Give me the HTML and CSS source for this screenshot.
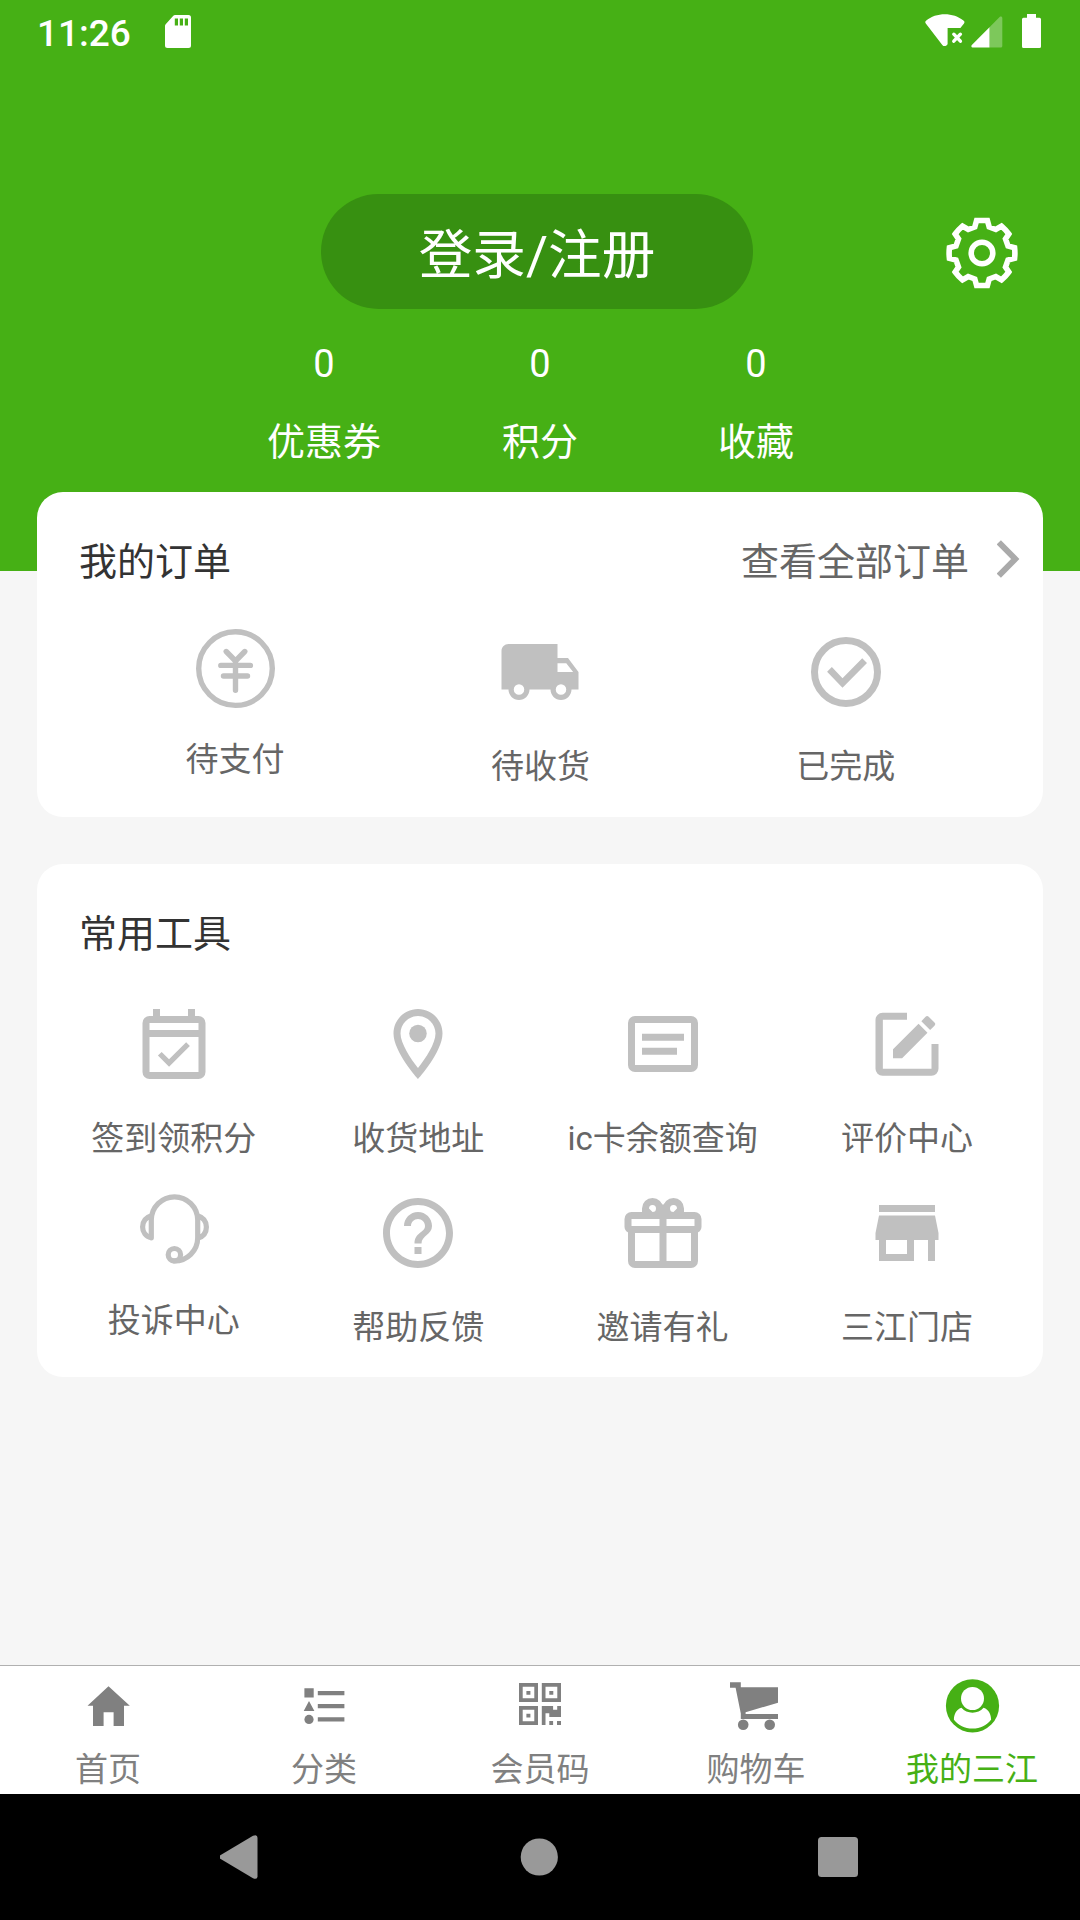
FILE: index.html
```html
<!DOCTYPE html>
<html lang="zh-CN">
<head>
<meta charset="utf-8">
<title>我的三江</title>
<link rel="stylesheet" href="styles.css">
</head>
<body>
<div class="screen">
  <header class="header">
    <div class="status">
      <span class="time">11:26</span>
      <svg class="sd" width="26" height="33" viewBox="0 0 26 33"><path fill="#fff" fill-rule="evenodd" d="M10 0h13.500a2.500 2.500 0 0 1 2.500 2.500v28a2.500 2.500 0 0 1-2.500 2.500h-21a2.500 2.500 0 0 1-2.500-2.500V11q0-1 .7-1.700L8.300 .7Q9 0 10 0zM9.800 3.500v7H13v-7zm5 0v7H18v-7zm5 0v7H23v-7z"/></svg>
      <div class="signals">
        <svg width="40" height="33" viewBox="0 0 40 33"><path fill="#fff" d="M.8 9.500C0 8.400.2 7.500 1 6.800 6 2.200 13 .2 19.800.2S33.500 2.200 38.700 6.800c.9.7 1 1.700.3 2.700L35.400 14H22.600v16c-1 2.400-4 2.800-5.300.9z"/><path stroke="#fff" stroke-width="3.400" stroke-linecap="round" d="M28.800 20.200l6.600 7M35.400 20.200l-6.600 7"/></svg>
        <svg class="cell" width="32" height="32" viewBox="0 0 32 32"><path fill="#fff" d="M18.500 11.300v20.200H1.600C.2 31.500 0 29.700.8 28.900z"/><path fill="#fff" fill-opacity=".3" d="M18.500 11.300L28.600 1c1.200-1 2.700-.4 2.700 1v28c0 .9-.6 1.500-1.500 1.500H18.500z"/></svg>
        <svg class="battery" width="19" height="34" viewBox="0 0 19 34"><path fill="#fff" d="M5 0h9v3.700h3.500q1.500 0 1.500 1.500v27.300q0 1.500-1.500 1.500h-16q-1.500 0-1.500-1.500V5.200q0-1.500 1.500-1.500H5z"/></svg>
      </div>
    </div>
    <div class="profile">
      <div class="login">登录/注册</div>
      <svg class="gear" width="72" height="72" viewBox="-36 -36 72 72" fill="none" stroke="#fff" stroke-width="5.600"><path d="M-5.400-32.500H5.400L7.200-26 13.800-23.500 19.500-26.900Q23.500-23.500 26.800-19L23.500-14 26-7 32.600-5.200Q33.200 0 32.600 5.200L26 7 23.500 14 26.800 19Q23.500 23.500 19.500 26.900L13.800 23.500 7.200 26 5.400 32.500H-5.400L-7.200 26-13.800 23.500-19.500 26.900Q-23.500 23.500-26.800 19L-23.500 14-26 7-32.600 5.200Q-33.200 0-32.600-5.200L-26-7-23.500-14-26.800-19Q-23.500-23.500-19.500-26.900L-13.800-23.500-7.200-26z"/><circle r="10.800"/></svg>
    </div>
    <div class="stats">
      <div class="stat"><span>0</span><span>优惠券</span></div>
      <div class="stat"><span>0</span><span>积分</span></div>
      <div class="stat"><span>0</span><span>收藏</span></div>
    </div>
  </header>

  <main class="cards">
    <section class="card">
      <div class="card-head">
        <h2>我的订单</h2>
        <a class="more">查看全部订单<svg width="24" height="38" viewBox="0 0 24 38"><path fill="none" stroke="#aaa" stroke-width="6" d="M1.800 2.300L18.200 19 1.800 35.700"/></svg></a>
      </div>
      <div class="grid orders">
        <div class="item">
          <svg class="short" viewBox="0 0 77 77" fill="none" stroke="#c0c0c0" stroke-width="5.400" stroke-linecap="round" stroke-linejoin="round"><circle cx="38.500" cy="38.600" r="36.800"/><path d="M29.200 21.500l9.300 9.500 9.300-9.500M23.800 35.400h29.600M26.500 46h24M38.500 31v29.300"/></svg>
          <span>待支付</span>
        </div>
        <div class="item">
          <svg viewBox="0 0 24 24" fill="#c0c0c0"><path fill-rule="evenodd" d="M20 8h-3V4H3c-1.100 0-2 .9-2 2v11h2c0 1.660 1.340 3 3 3s3-1.340 3-3h6c0 1.660 1.340 3 3 3s3-1.340 3-3h2v-5l-3-4zM6 18.500a1.500 1.500 0 1 1 0-3 1.500 1.500 0 0 1 0 3zm13.500-9l1.960 2.500H17V9.500h2.500zm-1.500 9a1.500 1.500 0 1 1 0-3 1.500 1.500 0 0 1 0 3z"/></svg>
          <span>待收货</span>
        </div>
        <div class="item">
          <svg viewBox="0 0 24 24"><circle cx="12" cy="12" r="9" fill="none" stroke="#c0c0c0" stroke-width="2"/><path fill="#c0c0c0" d="M16.640 8.100L11 13.750 7.960 10.550 6.600 11.950 11 16.500 18 9.450z"/></svg>
          <span>已完成</span>
        </div>
      </div>
    </section>

    <section class="card">
      <div class="card-head"><h2>常用工具</h2></div>
      <div class="grid tools">
        <div class="item">
          <svg viewBox="0 0 24 24" fill="#c0c0c0"><path fill-rule="evenodd" d="M6 2h2v2h8V2h2v2h1a2 2 0 0 1 2 2v14a2 2 0 0 1-2 2H5a2 2 0 0 1-2-2V6a2 2 0 0 1 2-2h1zM5 6v2h14V6zm0 4v10h14V10z"/><path d="M16.530 12.560l-1.060-1.060-4.880 4.880-2.120-2.120-1.060 1.060 3.180 3.180z"/></svg>
          <span>签到领积分</span>
        </div>
        <div class="item">
          <svg viewBox="0 0 24 24" fill="#c0c0c0"><path fill-rule="evenodd" d="M12 2C8.130 2 5 5.130 5 9c0 5.250 7 13 7 13s7-7.750 7-13c0-3.870-3.130-7-7-7zM7 9c0-2.760 2.240-5 5-5s5 2.240 5 5c0 2.880-2.880 7.190-5 9.880C9.920 16.210 7 11.850 7 9z"/><circle cx="12" cy="9" r="2.500"/></svg>
          <span>收货地址</span>
        </div>
        <div class="item">
          <svg viewBox="0 0 24 24" fill="none" stroke="#c0c0c0" stroke-width="2"><path fill="#c0c0c0" fill-rule="evenodd" stroke="none" d="M4 4h16a2 2 0 0 1 2 2v12a2 2 0 0 1-2 2H4a2 2 0 0 1-2-2V6a2 2 0 0 1 2-2zM4 6v12h16V6z"/><path d="M6 10.100h12M6 14.100h10"/></svg>
          <span>ic卡余额查询</span>
        </div>
        <div class="item">
          <svg viewBox="0 0 24 24" fill="#c0c0c0"><path d="M12 3.100v2H5.100v14H19V12h2v7.100a2 2 0 0 1-2 2H5a2 2 0 0 1-2-2v-14a2 2 0 0 1 2-2z"/><path d="M8 16.100h2.600l7.250-7.350-2.550-2.550L8 13.500zM16.100 5.500l1.200-1.300q.45-.45.9 0l1.650 1.650q.45.45 0 .9l-1.250 1.250z"/></svg>
          <span>评价中心</span>
        </div>
        <div class="item">
          <svg class="short" viewBox="0 0 77 77" fill="none" stroke="#c0c0c0" stroke-width="5.200" stroke-linecap="round" stroke-linejoin="round"><path d="M15.300 46.800V29a23.200 23.200 0 0 1 46.400 0V47A23.200 23.200 0 0 1 38.300 70M15.300 24.700C9.500 26.500 6.600 31 6.600 36s2.900 9.500 8.700 10.800M61.700 24.700c5.800 1.800 8.700 6.300 8.700 11.300s-2.900 9.500-8.700 11.300"/><circle cx="38.400" cy="63.700" r="6.200"/></svg>
          <span>投诉中心</span>
        </div>
        <div class="item">
          <svg viewBox="0 0 24 24" fill="#c0c0c0"><path fill-rule="evenodd" d="M11 18h2v-2h-2v2zm1-16C6.480 2 2 6.480 2 12s4.480 10 10 10 10-4.480 10-10S17.520 2 12 2zm0 18c-4.410 0-8-3.590-8-8s3.590-8 8-8 8 3.590 8 8-3.590 8-8 8zm0-14c-2.210 0-4 1.790-4 4h2c0-1.100.9-2 2-2s2 .9 2 2c0 2-3 1.750-3 5h2c0-2.250 3-2.500 3-5 0-2.210-1.790-4-4-4z"/></svg>
          <span>帮助反馈</span>
        </div>
        <div class="item">
          <svg viewBox="0 0 24 24" fill="none" stroke="#c0c0c0" stroke-width="2"><circle cx="9" cy="5" r="2"/><circle cx="15" cy="5" r="2"/><path fill="#c0c0c0" stroke="none" d="M6 5h2l1 1h6l1-1h2v2H6zM10.700 3l1.300.9 1.300-.9v3h-2.600z"/><path d="M3 7h18a1 1 0 0 1 1 1v2.300a.7.7 0 0 1-.7.7H2.700a.7.7 0 0 1-.7-.7V8a1 1 0 0 1 1-1zM3 11v9a1 1 0 0 0 1 1h16a1 1 0 0 0 1-1v-9M12 7v14"/></svg>
          <span>邀请有礼</span>
        </div>
        <div class="item">
          <svg viewBox="0 0 24 24" fill="#c0c0c0"><path fill-rule="evenodd" d="M20 4H4v2h16V4zm1 10v-2l-1-5H4l-1 5v2h1v6h10v-6h4v6h2v-6h1zm-9 4H6v-4h6v4z"/></svg>
          <span>三江门店</span>
        </div>
      </div>
    </section>
  </main>

  <nav class="tabs">
    <a class="tab">
      <svg viewBox="0 0 56 56" fill="currentColor"><path d="M28.500 8.300L49.800 27.700H44V48H33.600V34.300H23.600V48H13V27.700H7.500z"/></svg>
      <span>首页</span>
    </a>
    <a class="tab">
      <svg viewBox="0 0 56 56" fill="currentColor"><path d="M8.400 10.300h9.300v9.300H8.400zM13 23l5.400 10H7.700zM21.800 13h26.600v4.200H21.800zM21.800 26h26.600v4.200H21.800zM21.800 39.300h26.600v4.200H21.800z"/><circle cx="13" cy="41.400" r="4.600"/></svg>
      <span>分类</span>
    </a>
    <a class="tab">
      <svg viewBox="0 0 56 56" fill="currentColor"><path fill-rule="evenodd" d="M7 5h19v19H7zM10.700 8.700v11.600h11.600V8.700zM14.400 13h4v3.800h-4zM29.800 5h19.200v19H29.800zM33.500 8.700v11.600h11.800V8.700zM37.300 13h4v3.800h-4zM7 28h19v19H7zM10.700 31.700v11.600h11.600V31.700zM14.400 35.700h4v3.800h-4zM29.800 28h11.300v3.700h4.100V28H49v11H37.300v-3.700h-3.800V47h-3.700zM37.300 43h3.800v4h-3.800zM45 43h4v4h-4z"/></svg>
      <span>会员码</span>
    </a>
    <a class="tab">
      <svg viewBox="0 0 56 56" fill="currentColor"><path d="M2 4.300h10.800v5H50v15.400L17.600 34.300V36H50v5H12.800v-5.500L7.600 9.700H2z"/><circle cx="15.200" cy="46.700" r="5.300"/><circle cx="41.700" cy="46.700" r="5.300"/></svg>
      <span>购物车</span>
    </a>
    <a class="tab active">
      <svg viewBox="0 0 56 56"><circle cx="28.500" cy="27.800" r="26.600" fill="currentColor"/><circle cx="28.500" cy="20.500" r="11.500" fill="#fff"/><path fill="#fff" d="M17.400 29.800C12 31.500 10 37 9.900 41.700 14.500 47.500 20.500 50.500 28.500 50.500S42.500 47.500 47.100 41.700C47 37 45 31.500 39.600 29.800 36.500 33.200 33 34.700 28.500 34.700S20.500 33.200 17.400 29.800z"/></svg>
      <span>我的三江</span>
    </a>
  </nav>

  <div class="sysbar">
    <svg width="40" height="44" viewBox="0 0 40 44"><path fill="#999" d="M.3 20.300L33 .7Q37.500-1 37.500 2.700v38.600Q37.500 45 33 43.300L.3 23.700Q-1.500 22 .3 20.300z"/></svg>
    <svg width="38" height="38" viewBox="0 0 38 38"><circle cx="19.300" cy="19" r="18.600" fill="#999"/></svg>
    <svg width="40" height="40" viewBox="0 0 40 40"><rect width="40" height="40" rx="3.500" fill="#999"/></svg>
  </div>
</div>
</body>
</html>
```
FILE: styles.css
```css
* {
  box-sizing: border-box;
}

body {
  margin: 0;
  font-family: Roboto, "Noto Sans CJK SC", sans-serif;
}

svg {
  display: block;
  flex: none;
}

.screen {
  display: flex;
  flex-direction: column;
  width: 1080px;
  height: 1920px;
  overflow: hidden;
  background: #f6f6f6;
}

/* Header */

.header {
  flex: none;
  height: 571px;
  background: #46b015;
  color: #fff;
}

.status {
  display: flex;
  align-items: flex-start;
  height: 63px;
  padding: 14px 39px 0 37px;
}

.time {
  width: 128px;
  font-size: 37px;
  font-weight: 500;
  line-height: 39px;
}

.sd {
  margin-top: 1px;
}

.signals {
  display: flex;
  margin-left: auto;
}

.cell {
  margin: 1.5px 19px 0 6px;
}

.profile {
  display: flex;
  align-items: center;
  height: 115px;
  margin-top: 131px;
  padding: 0 62px 0 321px;
}

.login {
  width: 432px;
  height: 115px;
  padding-top: 8px;
  border-radius: 58px;
  background: #379011;
  font-size: 53.6px;
  line-height: 107px;
  text-align: center;
}

.gear {
  margin: 3px 0 0 auto;
}

.stats {
  display: grid;
  grid-template-columns: repeat(3, 216px);
  justify-content: center;
  margin-top: 31px;
}

.stat {
  display: flex;
  flex-direction: column;
  align-items: center;
  gap: 30px;
  font-size: 38px;
  line-height: 48px;
}

.stat span {
  height: 48px;
}

/* Cards */

.cards {
  display: flex;
  flex: 1;
  flex-direction: column;
  gap: 47px;
  margin-top: -79px;
  padding: 0 37px;
}

.card {
  padding: 46px 0 25px;
  border-radius: 26px;
  background: #fff;
}

.card-head {
  display: flex;
  justify-content: space-between;
  height: 48px;
  padding: 0 22px 0 42px;
  font-size: 38px;
  line-height: 48px;
}

h2 {
  margin: 0;
  color: #333;
  font-size: inherit;
  font-weight: 400;
}

.more {
  display: flex;
  gap: 28px;
  color: #666;
}

.more svg {
  margin-top: 2px;
}

.grid {
  display: grid;
  row-gap: 28px;
  margin-top: 44px;
}

.orders {
  grid-template-columns: repeat(3, 1fr);
  padding: 0 44.6px 0 45.4px;
}

.tools {
  grid-template-columns: repeat(4, 244.4px);
  padding-left: 14.6px;
}

.item {
  display: flex;
  flex-direction: column;
  align-items: center;
  gap: 29px;
  color: #666;
  font-size: 33px;
  line-height: 48px;
  white-space: nowrap;
}

.item span {
  height: 48px;
}

.orders .item span {
  margin-bottom: 1px;
}

.item svg {
  width: 84px;
  height: 84px;
}

.item .short {
  width: 77px;
  height: 77px;
  overflow: visible;
}

.tools .short {
  margin-left: 1px;
}

/* Bottom tabs */

.tabs {
  display: grid;
  flex: none;
  grid-template-columns: repeat(5, 1fr);
  height: 129px;
  padding-top: 12px;
  border-top: 1px solid #b0b0b0;
  background: #fff;
}

.tab {
  display: flex;
  flex-direction: column;
  align-items: center;
  gap: 12px;
  color: #808080;
  font-size: 33px;
  line-height: 48px;
}

.tab svg {
  width: 56px;
  height: 56px;
}

.tab span {
  height: 48px;
}

.active {
  color: #46b015;
}

/* System navigation */

.sysbar {
  display: grid;
  flex: none;
  grid-template-columns: repeat(3, 299px);
  align-items: center;
  justify-content: center;
  justify-items: center;
  height: 126px;
  padding-right: 2px;
  background: #000;
}
```
